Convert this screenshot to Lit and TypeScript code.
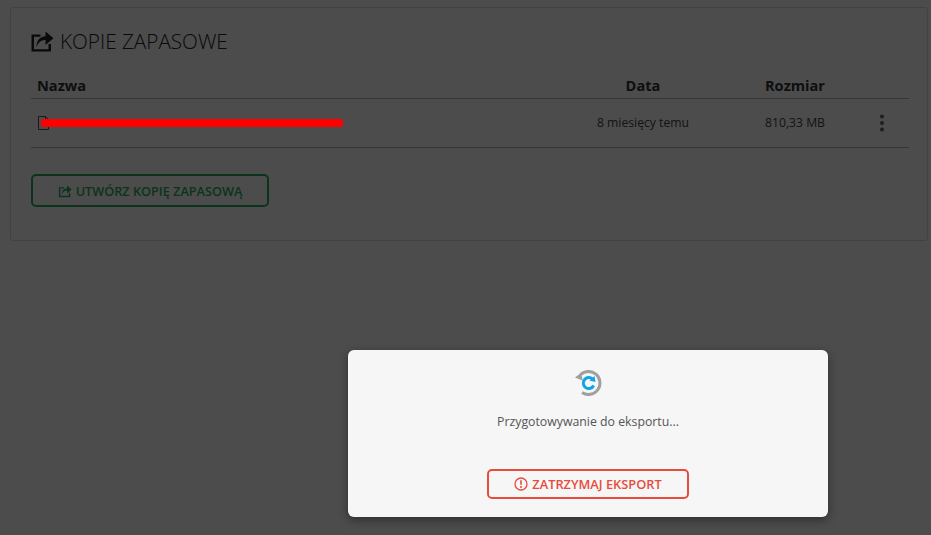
import { LitElement, html, css, svg } from "lit";
import { customElement } from "lit/decorators.js";

const share = svg`<path d="M1.500 5.500h9v2.300H4v12.400h14.500V15H21v7.500H1.500z"/><path d="M6.500 18c0-7 3.500-10.300 9-10.800V2.500l8 6.800-8 6.800v-5c-4 0-7 1.900-9 6.900z"/>`;

@customElement("app-root")
export class AppRoot extends LitElement {
  static styles = css`
    :host {
      display: block;
      height: 535px;
      background: #fff;
      font-family: "Open Sans", sans-serif;
      color: #333;
      overflow: hidden;
      position: relative;
    }
    .page { padding: 7px 3px 0 10px; }
    .panel {
      height: 234px;
      box-sizing: border-box;
      border: 1px solid #dcdcdc;
      border-radius: 3px;
      padding: 23px 18px 0 20px;
      background: #fff;
    }
    h1 {
      margin: 0;
      display: flex;
      align-items: center;
      gap: 7px;
      font-size: 20.7px;
      line-height: 20px;
      font-weight: 300;
      color: #222;
      height: 20px;
    }
    h1 svg { width: 24px; height: 24px; fill: #222; flex: none; margin-left: -1px; margin-right: -1px; }
    .row {
      display: grid;
      grid-template-columns: 1fr 184px 120px 54px;
      align-items: center;
      border-bottom: 1px solid #b5b5b5;
    }
    .head {
      margin-top: 23px;
      height: 25px;
      padding-bottom: 3px;
      box-sizing: border-box;
      font-size: 14.6px;
      font-weight: 700;
      color: #333;
    }
    .body { height: 49px; font-size: 12.2px; color: #444; padding-bottom: 1px; box-sizing: border-box; }
    .name { padding-left: 6px; display: flex; align-items: center; gap: 3px; position: relative; }
    .center { text-align: center; }
    .file { width: 11px; height: 14px; flex: none; margin-left: 1px; fill: none; stroke: #555; stroke-width: 1; }
    .mask {
      position: absolute;
      left: 10px;
      top: 50%;
      margin-top: -4px;
      width: 302px;
      height: 8px;
      border-radius: 2px;
      background: #f00;
      z-index: 11;
    }
    .dots { width: 6px; height: 18px; fill: #666; justify-self: center; }
    .btn {
      display: inline-flex;
      align-items: center;
      justify-content: center;
      gap: 4px;
      box-sizing: border-box;
      background: transparent;
      border-style: solid;
      border-width: 2px;
      border-radius: 5px;
      font-family: inherit;
      font-weight: 600;
      font-size: 12.7px;
      padding: 0;
    }
    .green {
      margin-top: 26px;
      width: 238px;
      height: 33px;
      color: #27ae60;
      border-color: #27ae60;
    }
    .green svg { width: 14px; height: 14px; fill: #27ae60; }
    .overlay {
      position: absolute;
      inset: 0;
      background: rgba(0, 0, 0, 0.7);
      z-index: 10;
    }
    .modal {
      position: absolute;
      left: 348px;
      top: 350px;
      width: 480px;
      height: 167px;
      background: #f6f6f6;
      border-radius: 6px;
      box-shadow: 0 3px 10px rgba(0, 0, 0, 0.4);
      z-index: 12;
      display: flex;
      flex-direction: column;
      align-items: center;
      padding-top: 19px;
      box-sizing: border-box;
    }
    .spin { width: 28px; height: 28px; display: block; }
    .msg { margin-top: 16px; font-size: 12.3px; line-height: 18px; color: #555; }
    .red {
      margin-top: 38px;
      width: 202px;
      height: 30px;
      color: #e74c3c;
      border-color: #e74c3c;
      font-size: 12.8px;
    }
    .red svg { width: 14px; height: 14px; }
  `;

  render() {
    return html`
      <div class="page">
        <section class="panel">
          <h1><svg viewBox="0 0 24 24">${share}</svg>KOPIE ZAPASOWE</h1>
          <div class="row head">
            <div class="name">Nazwa</div>
            <div class="center">Data</div>
            <div class="center">Rozmiar</div>
            <div></div>
          </div>
          <div class="row body">
            <div class="name">
              <svg class="file" viewBox="0 0 11 14"><path d="M.5.5h7l3 3v10H.5zM7.500.5v3h3"/></svg>
              <span class="mask"></span>
            </div>
            <div class="center">8 miesięcy temu</div>
            <div class="center">810,33 MB</div>
            <svg class="dots" viewBox="0 0 6 18"><circle cx="3" cy="2.500" r="2"/><circle cx="3" cy="9" r="2"/><circle cx="3" cy="15.500" r="2"/></svg>
          </div>
          <button class="btn green"><svg viewBox="0 0 24 24">${share}</svg>UTWÓRZ KOPIĘ ZAPASOWĄ</button>
        </section>
      </div>
      <div class="overlay"></div>
      <div class="modal">
        <svg class="spin" viewBox="0 0 28 28" fill="none">
          <path d="M6.500 5.700A11.500 11.500 0 1 1 8 23.500" stroke="#a0a0a0" stroke-width="3"/>
          <path d="M1 8.500 7.500 3.500 8.500 11.500z" fill="#a0a0a0"/>
          <path d="M18.500 10A5.500 5.500 0 1 0 19.700 16.500" stroke="#0ea5e9" stroke-width="3"/>
          <path d="M20.500 7 21.500 13 15.500 11.500z" fill="#0ea5e9"/>
        </svg>
        <div class="msg">Przygotowywanie do eksportu...</div>
        <button class="btn red">
          <svg viewBox="0 0 14 14" fill="none"><circle cx="7" cy="7" r="6" stroke="#e74c3c" stroke-width="1.300"/><path d="M7 3.200v4.600" stroke="#e74c3c" stroke-width="1.600"/><circle cx="7" cy="10" r="1" fill="#e74c3c"/></svg>
          ZATRZYMAJ EKSPORT
        </button>
      </div>
    `;
  }
}
